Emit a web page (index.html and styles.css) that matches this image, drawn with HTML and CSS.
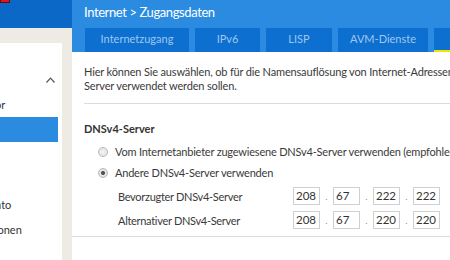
FILE: index.html
```html
<!DOCTYPE html>
<html lang="de">
<head>
    <meta charset="UTF-8">
    <meta name="viewport" content="width=device-width, initial-scale=1.0">
    <title>Internet - Zugangsdaten</title>
    <link rel="stylesheet" href="styles.css">
</head>
<body>
    <aside class="side">
        <div class="brand-bar"><span class="brand-mark"></span></div>
        <div class="menu-card">
            <ul class="menu">
                <li class="menu-item">Übersicht</li>
                <li class="menu-item menu-group">Internet
                    <svg class="chevron" width="9" height="6" viewBox="0 0 9 6"><path d="M0.5 5.5 L4.5 1.2 L8.5 5.5" fill="none" stroke="#555" stroke-width="1.2"/></svg>
                </li>
                <li class="menu-item">Online-Monitor</li>
                <li class="menu-item active">Zugangsdaten</li>
                <li class="menu-item">Filter</li>
                <li class="menu-item">Freigaben</li>
                <li class="menu-item">MyFRITZ!-Konto</li>
                <li class="menu-item">DSL-Informationen</li>
            </ul>
        </div>
    </aside>

    <main class="page">
        <header class="page-head">
            <div class="page-title">Internet <span class="crumb-sep">&gt;</span> Zugangsdaten</div>
            <nav class="tabs">
                <div class="tab tab-1">Internetzugang</div>
                <div class="tab tab-2">IPv6</div>
                <div class="tab tab-3">LISP</div>
                <div class="tab tab-4">AVM-Dienste</div>
                <div class="tab tab-5 selected">DNS-Server</div>
            </nav>
        </header>

        <section class="content">
            <p class="intro">Hier können Sie auswählen, ob für die Namensauflösung von Internet-Adressen<br>Server verwendet werden sollen.</p>
            <hr class="rule">

            <h2 class="block-title">DNSv4-Server</h2>

            <label class="radio-row">
                <span class="radio"></span>
                Vom Internetanbieter zugewiesene DNSv4-Server verwenden (empfohlen)
            </label>
            <label class="radio-row">
                <span class="radio checked"></span>
                Andere DNSv4-Server verwenden
            </label>

            <div class="ip-row">
                <span class="ip-label">Bevorzugter DNSv4-Server</span>
                <span class="ip-field">208</span><span class="ip-dot">.</span>
                <span class="ip-field">67</span><span class="ip-dot">.</span>
                <span class="ip-field">222</span><span class="ip-dot">.</span>
                <span class="ip-field">222</span>
            </div>
            <div class="ip-row">
                <span class="ip-label">Alternativer DNSv4-Server</span>
                <span class="ip-field">208</span><span class="ip-dot">.</span>
                <span class="ip-field">67</span><span class="ip-dot">.</span>
                <span class="ip-field">220</span><span class="ip-dot">.</span>
                <span class="ip-field">220</span>
            </div>

            <hr class="rule rule-full">
        </section>
    </main>
</body>
</html>
```

FILE: styles.css
```css
body {
    margin: 0;
    width: 450px;
    height: 260px;
    overflow: hidden;
    display: flex;
    font-family: Lato, "Open Sans", sans-serif;
    color: #3a3a3a;
    background-color: #fff;
}
.side {
    width: 72px;
    flex-shrink: 0;
    display: flex;
    flex-direction: column;
    background-color: #eeebe5;
}
.brand-bar {
    height: 28px;
    background-color: #0b68c6;
}
.brand-mark {
    display: block;
    width: 8px;
    height: 2px;
    background-color: #e0141e;
    border: 1px solid #5a1010;
    border-top: none;
}
.menu-card {
    flex: 1;
    margin-top: 15px;
    margin-right: 10px;
    background-color: #fff;
    overflow: hidden;
}
.menu {
    list-style: none;
    margin: 0 0 0 -70px;
    padding: 0;
    width: 128px;
}
.menu-item {
    height: 25px;
    line-height: 25px;
    font-size: 11px;
    white-space: nowrap;
    color: #333;
}
.menu-item:first-child {
    height: 24px;
}
.menu-group {
    display: flex;
    justify-content: space-between;
    align-items: center;
}
.chevron {
    margin-right: 3px;
}
.menu-item.active {
    background-color: #2a8be0;
    color: #fff;
}
.page {
    flex: 1;
    min-width: 0;
    overflow: hidden;
}
.page-head {
    background-color: #2a8be0;
    height: 52px;
}
.page-title {
    height: 28px;
    line-height: 25px;
    padding-left: 12px;
    font-size: 13px;
    letter-spacing: -0.4px;
    color: #fff;
    white-space: nowrap;
}
.tabs {
    display: flex;
    gap: 6px;
    height: 24px;
    margin-left: 13px;
    white-space: nowrap;
}
.tab {
    flex-shrink: 0;
    box-sizing: border-box;
    height: 24px;
    line-height: 22px;
    text-align: center;
    font-size: 11px;
    color: #9ec8f0;
    background-color: #0d6fcf;
}
.tab-1 { width: 104px; }
.tab-2 { width: 65px; }
.tab-3 { width: 66px; }
.tab-4 { width: 90px; }
.tab-5 { width: 110px; }
.tab.selected {
    border-bottom: 2px solid #f3e400;
    color: #fff;
}
.content {
    padding-top: 13px;
}
.intro {
    margin: 0 0 10px 12px;
    font-size: 11px;
    line-height: 14px;
    letter-spacing: -0.16px;
    white-space: nowrap;
}
.rule {
    border: none;
    border-top: 1px solid #dcdcdc;
    margin: 0 0 0 12px;
}
.rule-full {
    margin: 4px 0 0 0;
}
.block-title {
    margin: 18px 0 6px 12px;
    font-size: 11px;
    font-weight: 700;
    color: #333;
}
.radio-row {
    display: flex;
    align-items: center;
    height: 21px;
    padding-left: 26px;
    font-size: 11px;
    letter-spacing: -0.2px;
    white-space: nowrap;
}
.radio {
    box-sizing: border-box;
    width: 10px;
    height: 10px;
    margin-right: 7px;
    border-radius: 50%;
    border: 1px solid #b8b8b8;
    background: radial-gradient(circle, #f4f4f4 0, #dedede 100%);
    flex-shrink: 0;
}
.radio.checked {
    background: radial-gradient(circle, #555 0, #555 1.6px, #e8e8e8 2.4px, #d8d8d8 100%);
}
.ip-row {
    display: flex;
    align-items: center;
    height: 24px;
    padding-left: 46px;
    font-size: 11px;
    white-space: nowrap;
}
.ip-row:first-of-type {
    margin-top: 1px;
}
.ip-label {
    width: 175px;
    letter-spacing: -0.3px;
}
.ip-field {
    box-sizing: border-box;
    width: 27px;
    height: 18px;
    line-height: 16px;
    padding-left: 2px;
    border: 1px solid #cfcfcf;
    font-size: 11.5px;
    color: #333;
    flex-shrink: 0;
}
.ip-dot {
    width: 13px;
    text-align: center;
    color: #999;
    font-size: 10px;
}
```
